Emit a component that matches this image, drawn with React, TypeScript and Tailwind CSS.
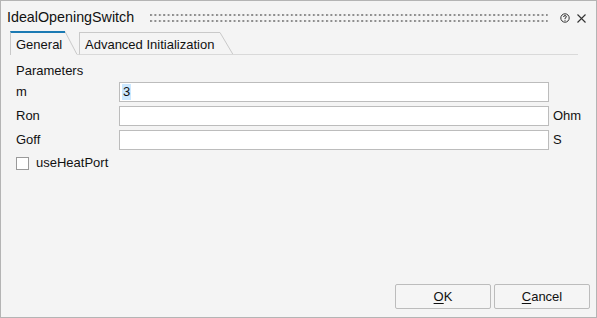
import React from 'react';

const font = { fontFamily: '"Liberation Sans", Arial, sans-serif' };

function GripDots() {
  return (
    <svg className="flex-1 h-[10px]" aria-hidden>
      <defs>
        <pattern id="grip" width="4.4" height="6" patternUnits="userSpaceOnUse">
          <rect x="0" y="1" width="2" height="2" fill="#8e8e8e" />
        </pattern>
      </defs>
      <rect x="0" y="0" width="100%" height="10" fill="url(#grip)" />
    </svg>
  );
}

function HelpIcon() {
  return (
    <svg width="10" height="10" viewBox="0 0 10 10" aria-hidden>
      <circle cx="5" cy="5" r="4.2" fill="none" stroke="#333" strokeWidth="1" />
      <path d="M3.6 4 Q3.6 2.6 5 2.6 Q6.4 2.6 6.4 3.8 Q6.4 4.6 5 5.2 L5 6" fill="none" stroke="#333" strokeWidth="1" />
      <rect x="4.5" y="6.8" width="1" height="1" fill="#333" />
    </svg>
  );
}

function CloseIcon() {
  return (
    <svg width="9" height="9" viewBox="0 0 9 9" aria-hidden>
      <path d="M0.5 0.5 L8.5 8.5 M8.5 0.5 L0.5 8.5" stroke="#333" strokeWidth="1.1" />
    </svg>
  );
}

function ParamRow({ label, value, unit }: { label: string; value?: string; unit?: string }) {
  return (
    <div className="flex items-center h-[20px]">
      <span className="w-[103px] text-[13px] text-[#111]">{label}</span>
      <div className="w-[430px] h-[20px] bg-white border border-[#bcbcbc] flex items-center px-[2px]">
        {value ? <span className="bg-[#cce8ff] text-[13px] leading-[16px] px-px text-[#111]">{value}</span> : null}
      </div>
      {unit ? <span className="ml-[4px] text-[13px] text-[#111]">{unit}</span> : null}
    </div>
  );
}

export default function App() {
  return (
    <div className="w-[597px] h-[318px] bg-[#f4f4f4] border border-[#b4b4b4] flex flex-col" style={font}>
      {/* title bar */}
      <div className="h-[30px] flex items-center pl-[6px] pr-[10px] pt-[4px]">
        <span className="text-[14.3px] text-[#111] mr-[16px]">IdealOpeningSwitch</span>
        <GripDots />
        <div className="flex items-center gap-[7px] ml-[12px]">
          <HelpIcon />
          <CloseIcon />
        </div>
      </div>

      {/* tabs */}
      <div className="flex items-end h-[24px] pl-[9px] pr-[18px]">
        <div className="h-[24px] border-l border-[#c9c9c9] border-t-2 border-t-[#1b7ab3] w-[55px] pl-[5px] pt-[2px] text-[13px] text-[#111]">
          General
        </div>
        <svg width="12" height="24" className="block shrink-0" aria-hidden>
          <line x1="0" y1="0.5" x2="12" y2="23.5" stroke="#c9c9c9" strokeWidth="1" />
        </svg>
        <div className="w-[2px] h-[1px] bg-[#d9d9d9]" />
        <div className="h-[23px] border-l border-t border-b border-[#c9c9c9] border-b-[#d9d9d9] w-[141px] pl-[5px] pt-[2px] text-[13px] text-[#111]">
          Advanced Initialization
        </div>
        <svg width="13" height="23" className="block shrink-0" aria-hidden>
          <line x1="0" y1="0.5" x2="13" y2="22.5" stroke="#c9c9c9" strokeWidth="1" />
          <line x1="0" y1="22.5" x2="13" y2="22.5" stroke="#d9d9d9" strokeWidth="1" />
        </svg>
        <div className="flex-1 h-[1px] bg-[#d9d9d9]" />
      </div>

      {/* content */}
      <div className="flex-1 flex flex-col pl-[15px] pt-[8px]">
        <div className="text-[13px] text-[#111] leading-[16px]">Parameters</div>
        <div className="flex flex-col gap-[4px] mt-[3px]">
          <ParamRow label="m" value="3" />
          <ParamRow label="Ron" unit="Ohm" />
          <ParamRow label="Goff" unit="S" />
        </div>
        <label className="flex items-center mt-[6px] h-[14px]">
          <span className="w-[13px] h-[13px] bg-white border border-[#9a9a9a] mr-[7px]" />
          <span className="text-[13px] text-[#111]">useHeatPort</span>
        </label>
        <div className="flex-1" />
        <div className="flex justify-end gap-[3px] pr-[6px] pb-[8px]">
          <button className="w-[96px] h-[25px] bg-[#f5f5f5] border border-[#bcbcbc] rounded-[2px] text-[13px] text-[#111]">
            <span className="underline underline-offset-2">O</span>K
          </button>
          <button className="w-[96px] h-[25px] bg-[#f5f5f5] border border-[#bcbcbc] rounded-[2px] text-[13px] text-[#111]">
            <span className="underline underline-offset-2">C</span>ancel
          </button>
        </div>
      </div>
    </div>
  );
}
